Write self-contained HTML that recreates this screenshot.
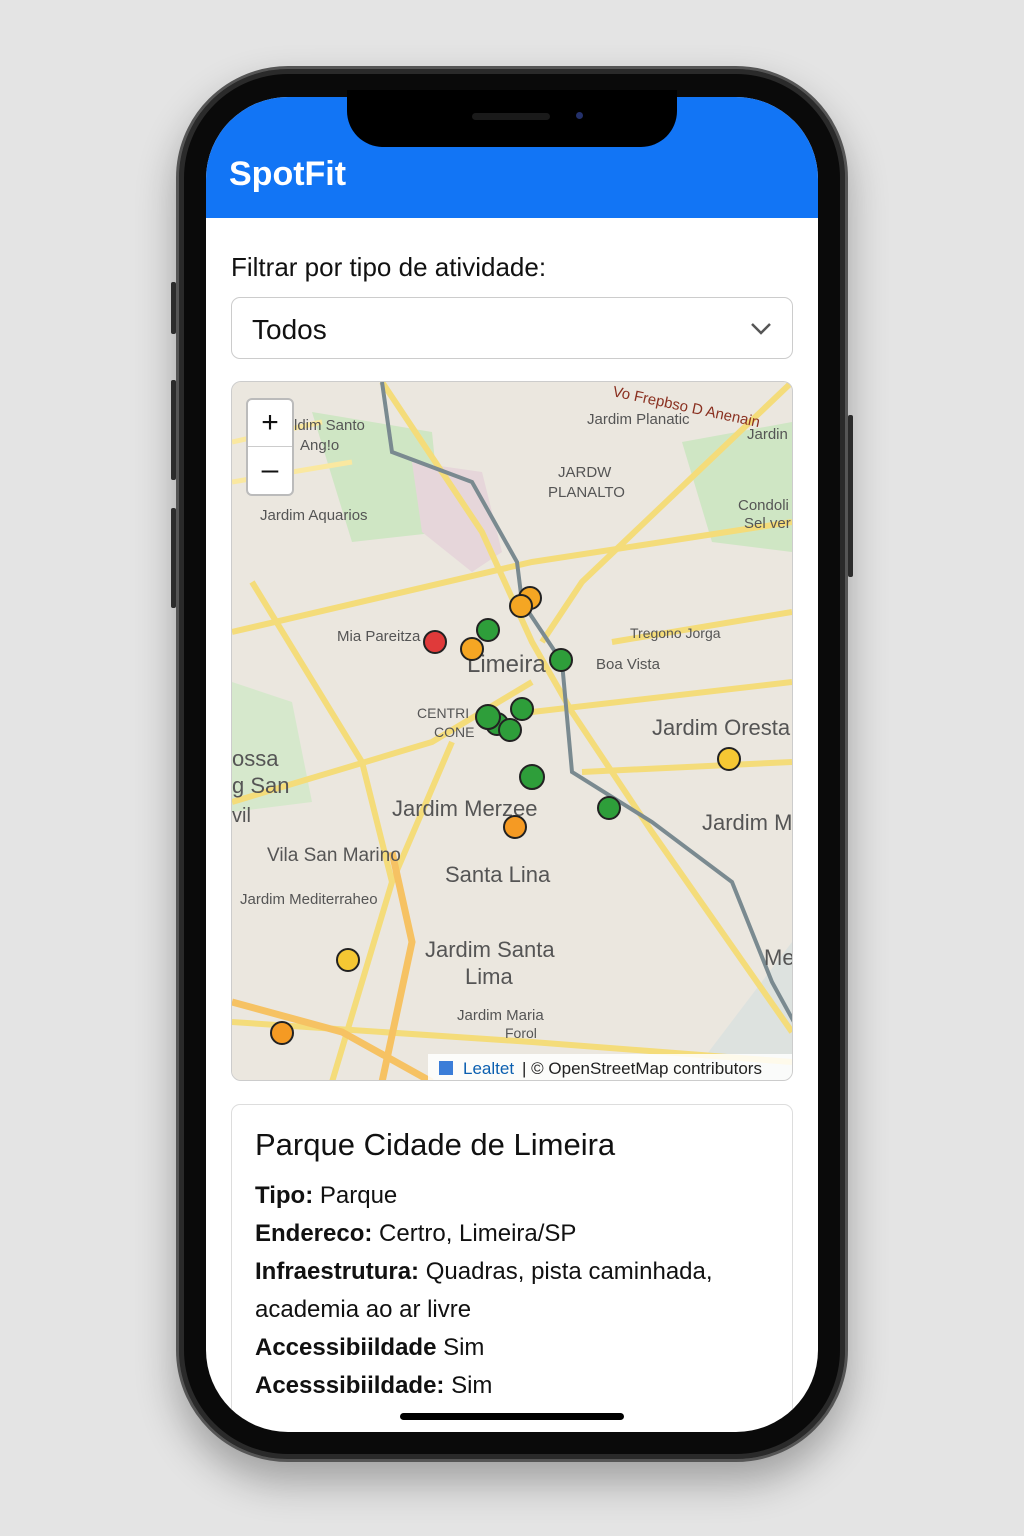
<!DOCTYPE html>
<html><head><meta charset="utf-8"><style>
*{margin:0;padding:0;box-sizing:border-box}
body{width:1024px;height:1536px;background:#e4e4e4;position:relative;overflow:hidden;font-family:"Liberation Sans",sans-serif}
.phone{position:absolute;left:176px;top:66px;width:672px;height:1396px;border-radius:112px;background:#0a0a0a;border:3px solid #555;box-shadow:0 20px 40px rgba(0,0,0,.3),inset 0 0 0 5px #2a2a2a}
.btn{position:absolute;background:#333;width:5px;border-radius:2px}
.screen{position:absolute;left:206px;top:97px;width:612px;height:1335px;border-radius:82px;background:#fff;overflow:hidden}
.hdr{position:absolute;left:0;top:0;width:612px;height:121px;background:#1275f5}
.hdr h1{position:absolute;left:23px;top:58px;color:#fff;font-size:34px;font-weight:bold}
.notch{position:absolute;left:347px;top:90px;width:330px;height:57px;background:#000;border-radius:0 0 36px 36px}
.lbl{position:absolute;left:25px;top:155px;font-size:26px;color:#111}
.sel{position:absolute;left:25px;top:200px;width:562px;height:62px;border:1px solid #ccc;border-radius:9px;font-size:28px;padding:16px 20px;color:#111}
.map{position:absolute;left:25px;top:284px;width:562px;height:700px;border:1px solid #ccc;border-radius:10px;overflow:hidden;background:#ebe7df}
.card{position:absolute;left:25px;top:1007px;width:562px;height:400px;border:1px solid #ddd;border-radius:9px;padding:22px 23px}
.card h2{font-weight:normal;font-size:31px;color:#111;margin-bottom:14px}
.card p{font-size:24px;color:#111;line-height:38px;margin-bottom:0}
.home{position:absolute;left:194px;top:1316px;width:224px;height:7px;background:#000;border-radius:4px}
</style></head><body>
<div class="btn" style="left:171px;top:282px;height:52px"></div>
<div class="btn" style="left:171px;top:380px;height:100px"></div>
<div class="btn" style="left:171px;top:508px;height:100px"></div>
<div class="btn" style="left:848px;top:415px;height:162px"></div>
<div class="phone"></div>
<div class="screen">
<div class="hdr"><h1>SpotFit</h1></div>
<div class="lbl">Filtrar por tipo de atividade:</div>
<div class="sel">Todos<svg style="position:absolute;right:20px;top:24px" width="22" height="14"><path d="M2 2 L11 11 L20 2" fill="none" stroke="#555" stroke-width="2.5"/></svg></div>
<div class="map">
<svg width="562" height="700" viewBox="0 0 562 700" font-family="Liberation Sans" font-size="15" fill="#444">
<rect width="562" height="700" fill="#ebe7df"/>
<path d="M80 30 L200 50 L210 150 L120 160Z" fill="#cfe6c4"/>
<path d="M450 60 L560 40 L560 170 L480 160Z" fill="#cfe6c4"/>
<path d="M0 300 L60 320 L80 420 L0 430Z" fill="#d6e8cc"/>
<path d="M340 850 L560 560 L560 700 L320 700Z" fill="#dde2df"/>
<path d="M180 80 L250 90 L270 170 L240 190 L190 150Z" fill="#e6d6da"/>
<path d="M0 60 L90 40 M0 100 L120 80" stroke="#fae8a0" stroke-width="5"/>
<g fill="none" stroke="#f4dc7a" stroke-width="6">
<path d="M0 250 L300 180 L560 140"/>
<path d="M150 0 L250 150 L300 260 L340 330 L420 450 L560 650"/>
<path d="M560 0 L350 200 L310 260"/>
<path d="M0 420 L200 360 L300 300"/>
<path d="M100 700 L160 500 L220 360"/>
<path d="M300 330 L560 300"/>
<path d="M0 640 L300 660 L560 680"/>
<path d="M20 200 L130 380 L160 500"/>
<path d="M380 260 L560 230"/>
<path d="M350 390 L560 380"/>
</g>
<g fill="none" stroke="#f6c263" stroke-width="7"><path d="M0 620 L110 650 L200 700"/><path d="M150 700 L180 560 L160 470"/></g>
<path d="M150 0 L160 70 L240 100 L285 180 L290 220 L330 280 L340 390 L420 440 L500 500 L540 600 L562 640" fill="none" stroke="#7a8a90" stroke-width="4"/>
<g fill="#555" font-size="15">
<text x="62" y="48">ldim Santo</text><text x="68" y="68">Ang!o</text>
<text x="355" y="42">Jardim Planatic</text><text x="515" y="57">Jardin</text>
<text x="326" y="95">JARDW</text><text x="316" y="115">PLANALTO</text>
<text x="506" y="128">Condoli</text><text x="512" y="146">Sel ver</text>
<text x="28" y="138">Jardim Aquarios</text>
<text x="105" y="259">Mia Pareitza</text>
<text x="235" y="290" font-size="24">Limeira</text>
<text x="364" y="287">Boa Vista</text>
<text x="398" y="256" font-size="14">Tregono Jorga</text>
<text x="185" y="336" font-size="14">CENTRI</text><text x="202" y="355" font-size="14">CONE</text>
<text x="420" y="353" font-size="22">Jardim Oresta</text>
<text x="0" y="384" font-size="22">ossa</text><text x="0" y="411" font-size="22">g San</text><text x="0" y="440" font-size="20">vil</text>
<text x="160" y="434" font-size="22">Jardim Merzee</text>
<text x="470" y="448" font-size="22">Jardim M</text>
<text x="35" y="479" font-size="19">Vila San Marino</text>
<text x="213" y="500" font-size="22">Santa Lina</text>
<text x="8" y="522">Jardim Mediterraheo</text>
<text x="193" y="575" font-size="22">Jardim Santa</text><text x="233" y="602" font-size="22">Lima</text>
<text x="225" y="638">Jardim Maria</text><text x="273" y="656" font-size="14">Forol</text>
<text x="532" y="583" font-size="22">Me</text>
<text x="380" y="14" fill="#8a3020" font-size="15" transform="rotate(12 380 14)">Vo Frepbso D Anenain</text>
</g>
<g stroke="#222" stroke-width="2">
<circle cx="298" cy="216" r="11" fill="#f5a623"/><circle cx="289" cy="224" r="11" fill="#f5a623"/>
<circle cx="256" cy="248" r="11" fill="#2e9e3a"/><circle cx="240" cy="267" r="11" fill="#f5a623"/>
<circle cx="203" cy="260" r="11" fill="#e03a3a"/><circle cx="329" cy="278" r="11" fill="#2e9e3a"/>
<circle cx="290" cy="327" r="11" fill="#2e9e3a"/><circle cx="265" cy="342" r="11" fill="#2e9e3a"/>
<circle cx="256" cy="335" r="12" fill="#2e9e3a"/><circle cx="278" cy="348" r="11" fill="#2e9e3a"/>
<circle cx="300" cy="395" r="12" fill="#2e9e3a"/><circle cx="377" cy="426" r="11" fill="#2e9e3a"/>
<circle cx="497" cy="377" r="11" fill="#f5c733"/><circle cx="283" cy="445" r="11" fill="#f59a23"/>
<circle cx="116" cy="578" r="11" fill="#f5c733"/><circle cx="50" cy="651" r="11" fill="#f59a23"/>
</g>
<rect x="196" y="672" width="366" height="28" fill="rgba(255,255,255,.85)"/>
<rect x="207" y="679" width="14" height="14" fill="#3b7dd8"/>
<text x="231" y="692" font-size="17" fill="#0b5fb0">Lealtet</text>
<text x="290" y="692" font-size="17" fill="#222">| © OpenStreetMap contributors</text>
</svg>
<div style="position:absolute;left:14px;top:16px;width:48px;height:98px;background:#fff;border:2px solid #bbb;border-radius:6px">
<div style="height:47px;border-bottom:1px solid #ccc;text-align:center;font-size:30px;line-height:46px;color:#111">+</div>
<div style="text-align:center;font-size:30px;line-height:46px;color:#111">–</div></div>
</div>
<div class="card">
<h2>Parque Cidade de Limeira</h2>
<p><b>Tipo:</b> Parque</p>
<p><b>Endereco:</b> Certro, Limeira/SP</p>
<p><b>Infraestrutura:</b> Quadras, pista caminhada, academia ao ar livre</p>
<p><b>Accessibiildade</b> Sim</p>
<p><b>Acesssibiildade:</b> Sim</p>
</div>
<div class="home"></div>
</div>
<div class="notch"></div>
<div style="position:absolute;left:472px;top:113px;width:78px;height:7px;background:#1a1a1a;border-radius:4px"></div>
<div style="position:absolute;left:576px;top:112px;width:7px;height:7px;background:#23306a;border-radius:50%"></div>
</body></html>
